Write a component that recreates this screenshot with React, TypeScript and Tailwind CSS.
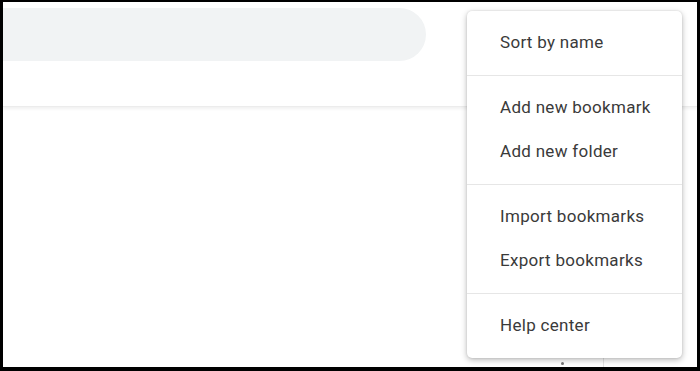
import { Fragment } from "react";

const sections = [
  ["Sort by name"],
  ["Add new bookmark", "Add new folder"],
  ["Import bookmarks", "Export bookmarks"],
  ["Help center"],
];

export default function App() {
  return (
    <div className="h-[371px] w-[700px] bg-black pb-[4px] pl-[3px] pr-[3px] pt-[2px] font-['Roboto',sans-serif]">
      <div className="relative h-full w-full overflow-hidden bg-white">
        <header className="h-[99px] border-b border-[#ececec] bg-white shadow-[0_2px_3px_rgba(0,0,0,0.06)]">
          <div className="ml-[-30px] mt-[6px] h-[53px] w-[453px] rounded-full bg-[#f1f3f4]" />
        </header>

        {/* bits of the page peeking out under the menu */}
        <div className="absolute left-[558px] top-[360px] h-[3px] w-[3px] rounded-full bg-[#777]" />
        <div className="absolute left-[600px] top-[348px] h-[20px] w-px bg-[#e4e4e4]" />

        <div className="absolute left-[464px] top-[9px] flex h-[347px] w-[215px] flex-col rounded-[5px] bg-white shadow-[0_2px_6px_rgba(0,0,0,0.28),0_0_2px_rgba(0,0,0,0.12)]">
          {sections.map((items, i) => (
            <Fragment key={i}>
              {i > 0 && <div className="h-px bg-[#e6e6e6]" />}
              <div className="pb-[10px] pt-[10px]">
                {items.map((label) => (
                  <div key={label} className="flex h-[44px] items-center pl-[33px] text-[17px] tracking-[0.3px] text-[#3a3a3a]">
                    {label}
                  </div>
                ))}
              </div>
            </Fragment>
          ))}
        </div>
      </div>
    </div>
  );
}
